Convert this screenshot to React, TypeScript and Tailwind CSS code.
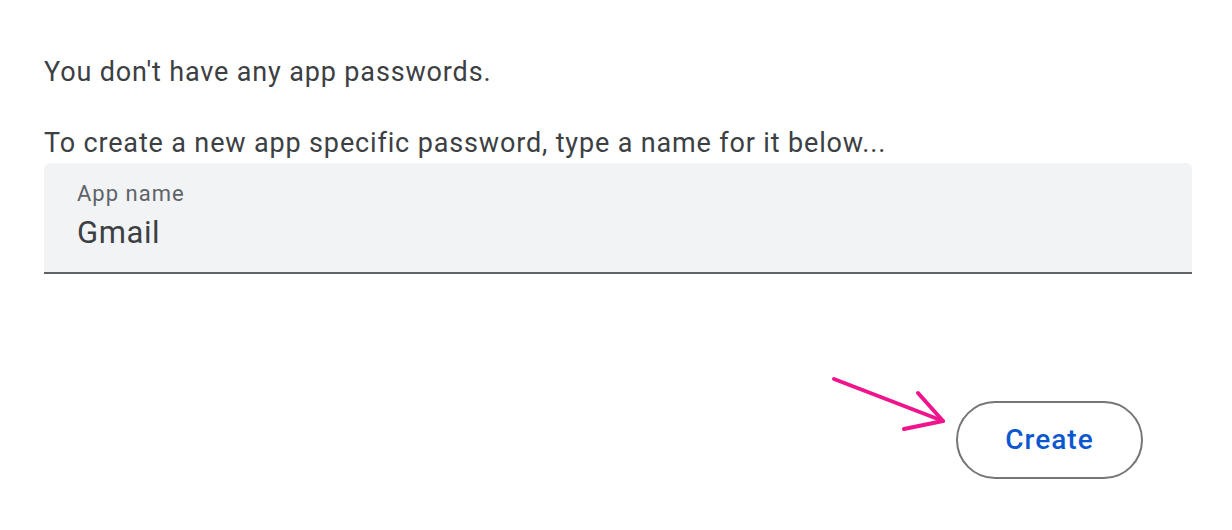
export default function App() {
  return (
    <div
      className="relative w-[1232px] h-[530px] bg-white overflow-hidden"
      style={{ fontFamily: "Roboto, 'Noto Sans', sans-serif" }}
    >
      <div className="pl-[44px] pr-[40px] pt-[55px]">
        <p className="text-[27px] leading-[34px] tracking-[0.85px] text-[#3c4043]">
          You don't have any app passwords.
        </p>
        <p className="mt-[37px] text-[27px] leading-[34px] tracking-[0.85px] text-[#3c4043]">
          To create a new app specific password, type a name for it below...
        </p>
        <div className="mt-[3px] h-[111px] rounded-t-[6px] bg-[#f1f3f4] border-b-2 border-[#5f6368] px-[33px] pt-[17px]">
          <div className="text-[22px] leading-[28px] tracking-[1px] text-[#5f6368]">App name</div>
          <div className="mt-[5px] text-[31px] leading-[40px] tracking-[0.6px] text-[#3c4043]">Gmail</div>
        </div>
        <div className="flex justify-end pr-[49px] pt-[127px]">
          <button className="w-[187px] h-[78px] rounded-full border-2 border-[#747775] text-[28px] font-medium tracking-[1px] text-[#0b57d0]">
            Create
          </button>
        </div>
      </div>

      <svg
        className="absolute left-0 top-0"
        width="1232"
        height="530"
        viewBox="0 0 1232 530"
        fill="none"
      >
        <g stroke="#f0148c" strokeWidth="4" strokeLinecap="round" strokeLinejoin="round">
          <path d="M834 379 L943 421" />
          <path d="M918 393 L943 421 L904 429" />
        </g>
      </svg>
    </div>
  );
}
